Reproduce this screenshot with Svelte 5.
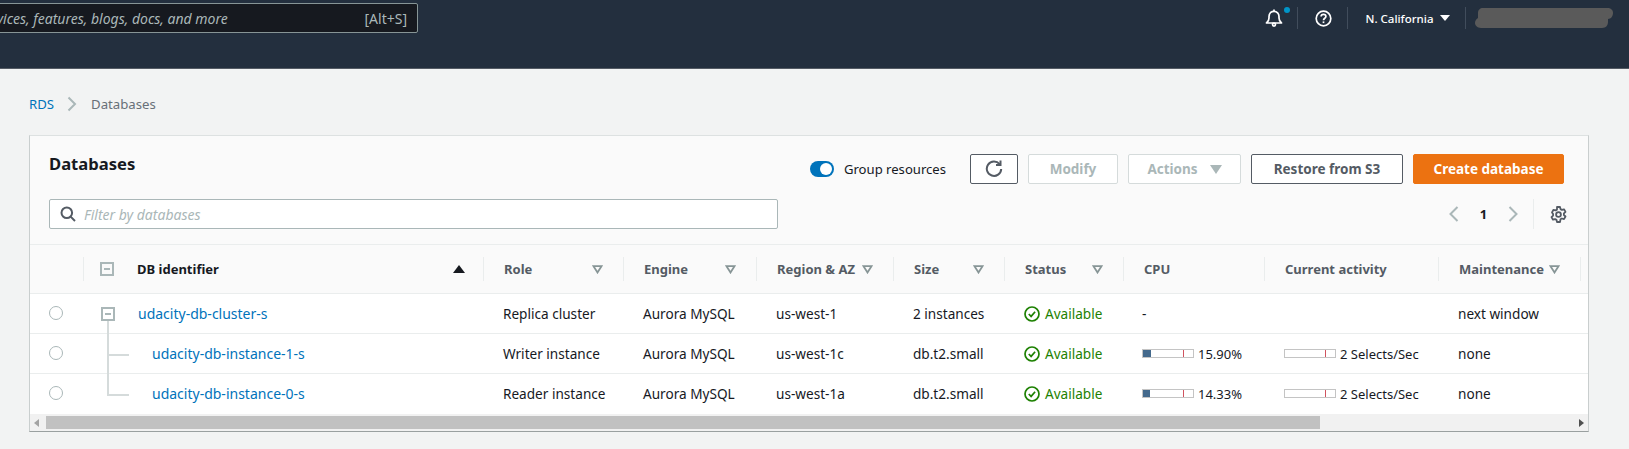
<script>
	const columns = [
		{ key: 'role', label: 'Role', width: 140, filter: true },
		{ key: 'engine', label: 'Engine', width: 133, filter: true },
		{ key: 'region', label: 'Region & AZ', width: 137, filter: true },
		{ key: 'size', label: 'Size', width: 111, filter: true },
		{ key: 'status', label: 'Status', width: 119, filter: true },
		{ key: 'cpu', label: 'CPU', width: 141 },
		{ key: 'activity', label: 'Current activity', width: 174 },
		{ key: 'maintenance', label: 'Maintenance', width: 142, filter: true }
	];

	const rows = [
		{
			name: 'udacity-db-cluster-s',
			kind: 'cluster',
			role: 'Replica cluster',
			engine: 'Aurora MySQL',
			region: 'us-west-1',
			size: '2 instances',
			maintenance: 'next window'
		},
		{
			name: 'udacity-db-instance-1-s',
			kind: 'child',
			role: 'Writer instance',
			engine: 'Aurora MySQL',
			region: 'us-west-1c',
			size: 'db.t2.small',
			cpu: 15.9,
			maintenance: 'none'
		},
		{
			name: 'udacity-db-instance-0-s',
			kind: 'last',
			role: 'Reader instance',
			engine: 'Aurora MySQL',
			region: 'us-west-1a',
			size: 'db.t2.small',
			cpu: 14.33,
			maintenance: 'none'
		}
	];
</script>

<header class="nav">
	<div class="search">
		<span class="search-text">Search for services, features, blogs, docs, and more</span>
		<span class="shortcut">[Alt+S]</span>
	</div>
	<div class="nav-right">
		<div class="nav-item bell">
			<svg width="18" height="18" viewBox="0 0 18 18" fill="none" stroke="#fff" stroke-width="1.7" stroke-linejoin="round">
				<path d="M1.500 14h15c-1.600-1.200-2.500-2.400-2.500-5V7.500C14 4.600 12 2.400 9 2.400S4 4.600 4 7.500V9c0 2.600-.9 3.800-2.500 5Z" />
				<path d="M9 .6v1.800" />
				<circle cx="9" cy="15.600" r="1.500" />
			</svg>
			<span class="dot"></span>
		</div>
		<div class="nav-item help">
			<svg width="17" height="17" viewBox="0 0 17 17" fill="none" stroke="#fff" stroke-width="1.7">
				<circle cx="8.500" cy="8.500" r="7.300" />
				<path d="M6.100 6.600c0-1.400 1-2.300 2.400-2.300s2.400.9 2.400 2.100c0 1.900-2.400 1.800-2.400 3.800" />
				<path d="M8.500 11.400v1.700" />
			</svg>
		</div>
		<div class="nav-item region">
			<span>N. California</span>
			<i class="nav-caret"></i>
		</div>
		<div class="nav-item account">
			<svg width="139" height="20" viewBox="0 0 139 20">
				<path fill="#5a5a5a" d="M8 0h124c4 0 6 2 6 5s-2 6-5 6v3c0 3-2 6-6 6H6c-4 0-6-3-6-5s1-4 3-5V5c0-3 2-5 5-5Z" />
			</svg>
		</div>
	</div>
</header>

<main class="page">
	<nav class="crumbs">
		<a href="#rds">RDS</a>
		<svg width="10" height="16" viewBox="0 0 10 16" fill="none" stroke="#aab7b8" stroke-width="2">
			<path d="M1.500 1.500 8 8l-6.500 6.500" />
		</svg>
		<span class="crumb-current">Databases</span>
	</nav>

	<section class="card">
		<div class="card-head">
			<div class="head-top">
				<h1>Databases</h1>
				<div class="actions">
					<label class="toggle">
						<span class="switch"></span>
						Group resources
					</label>
					<button class="btn refresh" aria-label="Refresh">
						<svg width="18" height="18" viewBox="0 0 18 18" fill="none" stroke="#545b64" stroke-width="2">
							<path d="M14.600 4.200A7.200 7.200 0 1 0 16.200 9" />
							<path d="M15.500 .6v4.500H11" />
						</svg>
					</button>
					<button class="btn modify" disabled>Modify</button>
					<button class="btn actions-btn" disabled>Actions <i class="btn-caret"></i></button>
					<button class="btn restore">Restore from S3</button>
					<button class="btn primary">Create database</button>
				</div>
			</div>
			<div class="head-bottom">
				<div class="filter">
					<svg width="16" height="16" viewBox="0 0 16 16" fill="none" stroke="#545b64" stroke-width="2">
						<circle cx="6.800" cy="6.800" r="5.300" />
						<path d="m10.600 10.600 4.400 4.400" />
					</svg>
					<span>Filter by databases</span>
				</div>
				<div class="pager">
					<svg width="10" height="16" viewBox="0 0 10 16" fill="none" stroke="#aab7b8" stroke-width="2">
						<path d="M8.500 1 1.500 8l7 7" />
					</svg>
					<span class="page-no">1</span>
					<svg width="10" height="16" viewBox="0 0 10 16" fill="none" stroke="#aab7b8" stroke-width="2">
						<path d="m1.500 1 7 7-7 7" />
					</svg>
					<span class="pager-line"></span>
					<svg class="gear" width="17" height="17" viewBox="0 0 17 17" fill="none" stroke="#545b64" stroke-width="1.800" stroke-linejoin="round">
						<path d="M7 1h3l.5 2.100 1.400.8 2.100-.6 1.500 2.600-1.600 1.500v1.600l1.600 1.500-1.500 2.600-2.100-.6-1.400.8L10 16H7l-.5-2.100-1.400-.8-2.100.6-1.500-2.600 1.600-1.500V8L2 6.400l1.500-2.600 2.100.6 1.400-.8Z" />
						<circle cx="8.500" cy="8.500" r="2.400" />
					</svg>
				</div>
			</div>
		</div>

		<div class="table-wrap">
			<table>
				<colgroup>
					<col style="width: 54px" />
					<col style="width: 400px" />
					{#each columns as col}
						<col style="width: {col.width}px" />
					{/each}
					<col style="width: 7px" />
				</colgroup>
				<thead>
					<tr>
						<th><div class="th-in"></div></th>
						<th>
							<div class="th-in id-head">
								<span class="minus head-minus"></span>
								<span class="id-label">DB identifier</span>
								<i class="sort"></i>
							</div>
						</th>
						{#each columns as col}
							<th>
								<div class="th-in">
									<span>{col.label}</span>
									{#if col.filter}
										<svg class="filter-caret" width="11" height="9" viewBox="0 0 11 9" fill="none" stroke="#879596" stroke-width="1.800">
											<path d="M1.500 1.200h8L5.500 7.500Z" />
										</svg>
									{/if}
								</div>
							</th>
						{/each}
						<th></th>
					</tr>
				</thead>
				<tbody>
					{#each rows as row}
						<tr>
							<td class="radio-cell"><span class="radio"></span></td>
							<td class="id-cell {row.kind}">
								{#if row.kind === 'cluster'}
									<span class="minus"></span>
								{:else}
									<span class="tree"></span>
								{/if}
								<a href="#db">{row.name}</a>
							</td>
							<td>{row.role}</td>
							<td>{row.engine}</td>
							<td>{row.region}</td>
							<td>{row.size}</td>
							<td>
								<span class="status">
									<svg width="16" height="16" viewBox="0 0 16 16" fill="none" stroke="#1d8102" stroke-width="1.700">
										<circle cx="8" cy="8" r="7" />
										<path d="m4.800 8 2.300 2.400 4-4.600" />
									</svg>
									Available
								</span>
							</td>
							<td class="cpu-cell">
								{#if row.cpu}
									<span class="meter">
										<span class="bar">
											<span class="fill" style="width: {row.cpu}%"></span>
											<span class="tick"></span>
										</span>
										{row.cpu.toFixed(2)}%
									</span>
								{:else}
									<span class="dash">-</span>
								{/if}
							</td>
							<td>
								{#if row.cpu}
									<span class="meter">
										<span class="bar"><span class="tick"></span></span>
										2 Selects/Sec
									</span>
								{/if}
							</td>
							<td>{row.maintenance}</td>
							<td></td>
						</tr>
					{/each}
				</tbody>
			</table>
		</div>

		<div class="scrollbar">
			<i class="arrow left"></i>
			<span class="thumb"></span>
			<i class="arrow right"></i>
		</div>
	</section>
</main>

<style>
	:global(body) {
		background: #f2f3f3;
		font-family: 'Noto Sans', sans-serif;
		font-size: 13px;
		color: #16191f;
		overflow: hidden;
	}

	.nav {
		display: flex;
		height: 68px;
		background: #232f3e;
		border-bottom: 1px solid #545b64;
	}

	.search {
		display: flex;
		align-items: center;
		justify-content: space-between;
		box-sizing: border-box;
		width: 549px;
		height: 30px;
		margin: 3px 0 0 -131px;
		padding: 0 10px 0 41px;
		background: #16191f;
		border: 1px solid #879596;
		border-radius: 2px;
		color: #aab7b8;
		font-size: 14px;
		white-space: nowrap;
	}

	.search-text {
		font-style: italic;
	}

	.nav-right {
		display: flex;
		align-items: flex-start;
		margin: 7px 15px 0 auto;
	}

	.nav-item {
		display: flex;
		align-items: center;
		justify-content: center;
		position: relative;
		box-sizing: border-box;
		height: 22px;
		border-right: 1px solid #414d5c;
	}

	.bell {
		width: 50px;
		padding-left: 2px;
	}

	.help {
		width: 50px;
		padding-left: 2px;
	}

	.region {
		width: 118px;
		gap: 6px;
		padding-left: 2px;
		color: #fff;
		font-size: 11.5px;
		font-weight: 500;
	}

	.account {
		border-right: 0;
		width: 148px;
		justify-content: flex-end;
	}

	.dot {
		position: absolute;
		right: 7px;
		top: 0;
		width: 6px;
		height: 6px;
		border-radius: 50%;
		background: #0095c8;
	}

	.nav-caret {
		border: 5px solid transparent;
		border-top: 6px solid #fff;
		border-bottom: 0;
	}

	.page {
		padding: 0 40px 0 29px;
	}

	.crumbs {
		display: flex;
		align-items: center;
		gap: 13px;
		height: 66px;
		padding-top: 4px;
		box-sizing: border-box;
		color: #687078;
		font-size: 13.2px;
	}

	.crumb-current {
		margin-left: 1px;
	}

	a {
		color: #0073bb;
		text-decoration: none;
	}

	.card {
		box-sizing: border-box;
		height: 297px;
		background: #fff;
		border: 1px solid #dde1e1;
		border-bottom-color: #9aa0a0;
		border-left-color: #c9cece;
		border-right-color: #c9cece;
		display: flex;
		flex-direction: column;
	}

	.card-head {
		box-sizing: border-box;
		height: 109px;
		padding: 18px 24px 0 19px;
		background: #fafafa;
		border-bottom: 1px solid #eaeded;
	}

	.head-top {
		display: flex;
		align-items: flex-start;
		justify-content: space-between;
	}

	h1 {
		margin: -1px 0 0;
		font-size: 16.6px;
		font-weight: 700;
		line-height: 22px;
	}

	.actions {
		display: flex;
		align-items: center;
		gap: 10px;
	}

	.toggle {
		display: flex;
		align-items: center;
		gap: 10px;
		margin-right: 14px;
		font-size: 13.1px;
	}

	.switch {
		position: relative;
		margin-left: -1px;
		width: 24px;
		height: 16px;
		border-radius: 8px;
		background: #0073bb;
	}

	.switch::after {
		content: '';
		position: absolute;
		right: 2px;
		top: 2px;
		width: 12px;
		height: 12px;
		border-radius: 50%;
		background: #fff;
	}

	.btn {
		box-sizing: border-box;
		height: 30px;
		padding: 0;
		display: flex;
		align-items: center;
		justify-content: center;
		gap: 12px;
		background: #fff;
		border: 1px solid #545b64;
		border-radius: 2px;
		color: #545b64;
		font: 700 13.5px 'Noto Sans', sans-serif;
	}

	.btn:disabled {
		border-color: #d5dbdb;
		color: #aab7b8;
	}

	.refresh {
		width: 48px;
	}

	.modify {
		width: 90px;
	}

	.actions-btn {
		width: 113px;
	}

	.restore {
		width: 152px;
	}

	.primary {
		width: 151px;
		background: #ec7211;
		border-color: #ec7211;
		color: #fff;
	}

	.btn-caret {
		border: 6px solid transparent;
		border-top: 9px solid #aab7b8;
		border-bottom: 0;
	}

	.head-bottom {
		display: flex;
		align-items: center;
		justify-content: space-between;
		margin-top: 15px;
	}

	.filter {
		display: flex;
		align-items: center;
		gap: 8px;
		box-sizing: border-box;
		width: 729px;
		height: 30px;
		padding-left: 10px;
		background: #fff;
		border: 1px solid #aab7b8;
		border-radius: 2px;
		color: #aab7b8;
		font-size: 14px;
		font-style: italic;
	}

	.pager {
		display: flex;
		align-items: center;
		margin-right: -3px;
		color: #16191f;
	}

	.page-no {
		width: 49px;
		text-align: center;
		font-weight: 700;
	}

	.pager-line {
		width: 1px;
		height: 30px;
		margin: 0 16px 0 15px;
		background: #eaeded;
	}

	.table-wrap {
		flex: 1;
		overflow: hidden;
	}

	table {
		width: 1558px;
		table-layout: fixed;
		border-collapse: separate;
		border-spacing: 0;
	}

	th {
		height: 48px;
		padding: 0;
		background: #fafafa;
		border-bottom: 1px solid #eaeded;
		color: #545b64;
		font-weight: 700;
		text-align: left;
	}

	.th-in {
		display: flex;
		align-items: center;
		justify-content: space-between;
		box-sizing: border-box;
		height: 24px;
		padding: 0 20px 0 20px;
		border-right: 1px solid #eaeded;
	}

	.filter-caret {
		flex: none;
	}

	.id-head {
		justify-content: flex-start;
		padding-left: 16px;
		padding-right: 18px;
	}

	.id-label {
		margin-left: 23px;
		color: #16191f;
	}

	.sort {
		margin-left: auto;
		border: 6px solid transparent;
		border-bottom: 8px solid #16191f;
		border-top: 0;
	}

	td {
		height: 39px;
		padding: 0 0 0 19px;
		border-bottom: 1px solid #eaeded;
		font-size: 13.6px;
		white-space: nowrap;
	}

	tbody tr:last-child td {
		border-bottom: 0;
	}

	.radio-cell {
		padding-left: 19px;
	}

	.radio {
		display: block;
		box-sizing: border-box;
		width: 14px;
		height: 14px;
		margin-top: -2px;
		border: 1px solid #aab7b8;
		border-radius: 50%;
		background: #fff;
	}

	.minus {
		position: relative;
		display: block;
		box-sizing: border-box;
		flex: none;
		width: 14px;
		height: 14px;
		border: 2px solid #aab7b8;
	}

	.minus::after {
		content: '';
		position: absolute;
		left: 2px;
		right: 2px;
		top: 4px;
		height: 2px;
		background: #aab7b8;
	}

	.id-cell {
		position: relative;
		padding-left: 54px;
		font-size: 14px;
	}

	.id-cell .minus {
		position: absolute;
		left: 17px;
		top: 13px;
	}

	/* tree connectors, drawn across the row borders */
	.id-cell .minus::before {
		content: '';
		position: absolute;
		left: 4px;
		top: 12px;
		width: 2px;
		height: 13px;
		background: #d5dbdb;
	}

	.id-cell.child,
	.id-cell.last {
		padding-left: 68px;
	}

	.tree {
		position: absolute;
		left: 23px;
		top: -1px;
		width: 20px;
		height: 21px;
		border-left: 2px solid #d5dbdb;
		border-bottom: 2px solid #d5dbdb;
	}

	.child .tree::after {
		content: '';
		position: absolute;
		left: -2px;
		top: 21px;
		width: 2px;
		height: 19px;
		background: #d5dbdb;
	}

	.status {
		display: flex;
		align-items: center;
		gap: 5px;
		color: #1d8102;
	}

	.meter {
		display: flex;
		align-items: center;
		gap: 4px;
		font-size: 13px;
	}

	.cpu-cell {
		padding-left: 18px;
	}

	.bar {
		position: relative;
		box-sizing: border-box;
		flex: none;
		width: 52px;
		height: 9px;
		background: #fff;
		border: 1px solid #c4c4c4;
	}

	.fill {
		position: absolute;
		left: 0;
		top: 0;
		bottom: 0;
		background: #44698c;
	}

	.tick {
		position: absolute;
		left: 40px;
		top: 0;
		bottom: 0;
		width: 1px;
		background: #d0535e;
	}

	.scrollbar {
		display: flex;
		align-items: center;
		height: 17px;
		background: #f1f1f1;
		padding: 0;
	}

	.thumb {
		width: 1274px;
		height: 13px;
		margin-left: 16px;
		background: #c1c1c1;
	}

	.arrow {
		position: absolute;
		border: 4px solid transparent;
	}

	.arrow.left {
		left: 34px;
		border-left: 0;
		border-right: 5px solid #a3a3a3;
	}

	.arrow.right {
		left: 1579px;
		border-right: 0;
		border-left: 5px solid #505050;
	}
</style>
